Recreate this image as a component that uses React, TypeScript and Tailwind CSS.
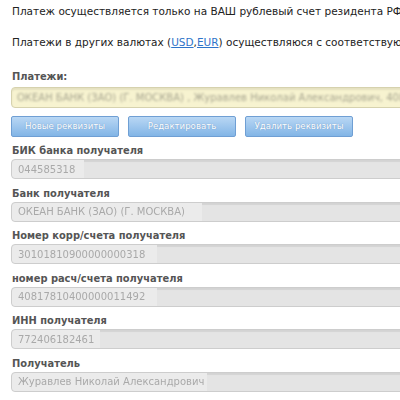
import React from "react";

const fields = [
  { label: "БИК банка получателя", value: "044585318", w: "w-[72px]" },
  { label: "Банк получателя", value: "ОКЕАН БАНК (ЗАО) (Г. МОСКВА)", w: "w-[190px]" },
  { label: "Номер корр/счета получателя", value: "30101810900000000318", w: "w-[145px]" },
  { label: "номер расч/счета получателя", value: "40817810400000011492", w: "w-[145px]" },
  { label: "ИНН получателя", value: "772406182461", w: "w-[88px]" },
  { label: "Получатель", value: "Журавлев Николай Александрович", w: "w-[195px]" },
];

function Button({ children }: { children: React.ReactNode }) {
  return (
    <button className="w-[108px] h-[21px] rounded-[2px] border border-[#6f9fd4] bg-gradient-to-b from-[#b9d7f4] to-[#82b5e6] text-[8.6px] text-white [text-shadow:0_0_1px_rgba(60,100,150,0.6)]">
      {children}
    </button>
  );
}

export default function App() {
  return (
    <div className="w-[400px] h-[400px] overflow-hidden bg-white whitespace-nowrap font-['DejaVu_Sans',Verdana,sans-serif]">
      <div className="pl-3 pt-[4px] text-[10.5px] text-[#222] leading-[14px]">
        Платеж осуществляется только на ВАШ рублевый счет резидента РФ
      </div>
      <div className="pl-3 pt-[17px] text-[10.5px] text-[#222] leading-[14px]">
        Платежи в других валютах (
        <a className="text-[#2f74c9] underline">USD</a>,
        <a className="text-[#2f74c9] underline">EUR</a>) осуществляюся с соответствующими
      </div>

      <div className="pl-3 pt-[21px] text-[9.9px] font-bold text-[#555] leading-[14px]">Платежи:</div>
      <div className="ml-[11px] mt-[3px] w-[420px] h-[21px] rounded-[4px] border border-[#d6d2ae] bg-[#f7f3d0] shadow-[inset_0_2px_2px_rgba(0,0,0,0.08)] flex items-center pl-[5px]">
        <span className="text-[10px] text-[#a8a690] blur-[0.8px]">
          ОКЕАН БАНК (ЗАО) (Г. МОСКВА) , Журавлев Николай Александрович, 40817810400000011492
        </span>
      </div>

      <div className="flex gap-[9px] pl-[11px] mt-[8px]">
        <Button>Новые реквизиты</Button>
        <Button>Редактировать</Button>
        <Button>Удалить реквизиты</Button>
      </div>

      <div className="mt-[7px] flex flex-col gap-[7.5px]">
        {fields.map((f, i) => (
          <div key={i} className="flex flex-col">
            <div className="pl-3 text-[9.9px] font-bold text-[#555] leading-[14px]">{f.label}</div>
            <div className="ml-[11px] mt-[1px] w-[420px] h-[20px] rounded-[4px] border border-[#cdcdcd] bg-[#e4e4e4] shadow-[inset_0_2px_1px_rgba(0,0,0,0.07)] flex items-center">
              <div className={`${f.w} h-full bg-[#ebebeb] rounded-l-[4px] flex items-center pl-[6px]`}>
                <span className="text-[10px] text-[#a9a9a9] blur-[0.6px]">{f.value}</span>
              </div>
            </div>
          </div>
        ))}
      </div>
    </div>
  );
}
